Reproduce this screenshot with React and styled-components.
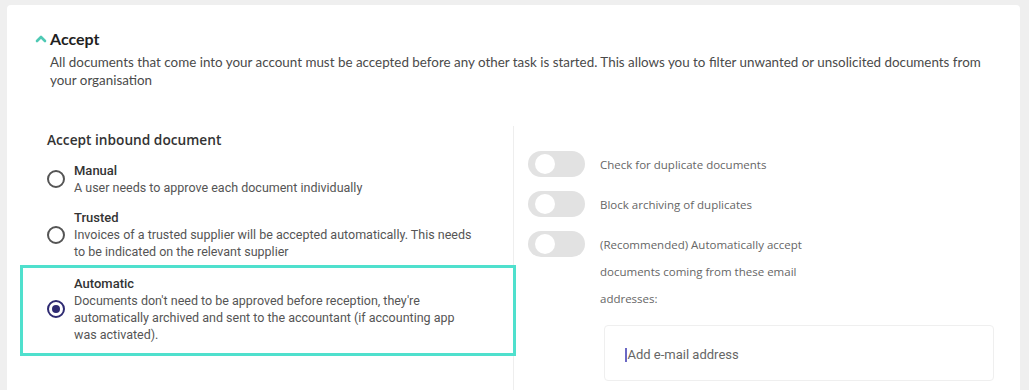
import React from "react";
import styled, { createGlobalStyle } from "styled-components";

const Global = createGlobalStyle`
  html, body { margin: 0; padding: 0; background: #efefef; }
  body { height: 390px; overflow: hidden; }
  * { box-sizing: border-box; }
`;

const Page = styled.div`
  padding: 5px 9px 0 7px;
  height: 390px;
`;

const Card = styled.section`
  background: #fff;
  border-radius: 4px 4px 0 0;
  height: 100%;
  padding: 0 13px;
  display: flex;
  flex-direction: column;
  overflow: hidden;
  font-family: Lato, "Open Sans", sans-serif;
`;

const Header = styled.header`
  padding: 24px 0 0 15px;
`;

const TitleRow = styled.div`
  display: flex;
  align-items: center;
  gap: 3px;
`;

const Title = styled.h2`
  margin: 0;
  font-family: Lato, sans-serif;
  font-weight: 700;
  font-size: 16px;
  line-height: 20px;
  color: #1f1f1f;
`;

const Description = styled.p`
  margin: 4px 0 0 15px;
  font-family: Lato, sans-serif;
  font-size: 13.4px;
  line-height: 18px;
  color: #4a4a4a;
  max-width: 940px;
`;

const Columns = styled.div`
  display: grid;
  grid-template-columns: 493px 1fr;
  margin-top: 37px;
  flex: 1;
  min-height: 0;
`;

const LeftCol = styled.div`
  padding-top: 4px;
`;

const RightCol = styled.div`
  border-left: 1px solid #eeeeee;
  padding: 25px 0 0 14px;
`;

const SectionTitle = styled.h3`
  margin: 0 0 0 27px;
  font-family: "Open Sans", sans-serif;
  font-weight: 600;
  font-size: 13.7px;
  line-height: 20px;
  color: #333;
`;

const Options = styled.div`
  display: flex;
  flex-direction: column;
  gap: 13px;
  margin-top: 12px;
`;

const Option = styled.label`
  display: flex;
  align-items: center;
  gap: 9px;
  padding: ${(p) => (p.$selected ? "7px 8px 10px 24px" : "0 8px 0 27px")};
  border: ${(p) => (p.$selected ? "3px solid #4fe0cd" : "none")};
  margin-right: ${(p) => (p.$selected ? "-3px" : "0")};
  margin-top: ${(p) => (p.$selected ? "-8px" : "0")};
  position: relative;
  cursor: pointer;
`;

const Radio = styled.span`
  flex: none;
  width: 18px;
  height: 18px;
  border-radius: 50%;
  border: 2px solid ${(p) => (p.$checked ? "#2e2a72" : "#555")};
  display: flex;
  align-items: center;
  justify-content: center;
  &::after {
    content: "";
    width: 8px;
    height: 8px;
    border-radius: 50%;
    background: ${(p) => (p.$checked ? "#2e2a72" : "transparent")};
  }
`;

const OptionText = styled.div`
  font-family: Roboto, sans-serif;
  max-width: 405px;
`;

const OptionTitle = styled.div`
  font-size: 13px;
  font-weight: 500;
  line-height: 17px;
  color: #333;
`;

const OptionDesc = styled.div`
  font-size: 12.5px;
  line-height: 17px;
  color: #555;
`;

const ToggleList = styled.div`
  display: flex;
  flex-direction: column;
  gap: 13px;
`;

const ToggleRow = styled.div`
  display: flex;
  align-items: flex-start;
  gap: 15px;
`;

const Toggle = styled.span`
  flex: none;
  width: 57px;
  height: 26px;
  border-radius: 13px;
  background: #e2e2e2;
  position: relative;
  &::after {
    content: "";
    position: absolute;
    left: 7px;
    top: 3px;
    width: 20px;
    height: 20px;
    border-radius: 50%;
    background: #fff;
  }
`;

const ToggleLabel = styled.span`
  font-family: "Open Sans", sans-serif;
  font-size: 11.5px;
  line-height: 27px;
  color: #666;
  max-width: ${(p) => (p.$narrow ? "215px" : "none")};
`;

const EmailBox = styled.div`
  margin: 13px 0 0 76px;
  width: 390px;
  height: 56px;
  border: 1px solid #efefef;
  border-radius: 4px;
  display: flex;
  align-items: center;
  padding-left: 20px;
  padding-top: 3px;
`;

const Caret = styled.span`
  width: 1.5px;
  height: 14px;
  background: #6b68c4;
  margin-right: 1px;
`;

const Placeholder = styled.span`
  font-family: Roboto, sans-serif;
  font-size: 13px;
  color: #666;
`;

const Chevron = () => (
  <svg width="12" height="10" viewBox="0 0 12 10">
    <path d="M2 7 L6 3 L10 7" fill="none" stroke="#4fc9b4" strokeWidth="2.6" strokeLinecap="round" strokeLinejoin="round" />
  </svg>
);

const options = [
  { title: "Manual", desc: "A user needs to approve each document individually" },
  { title: "Trusted", desc: "Invoices of a trusted supplier will be accepted automatically. This needs to be indicated on the relevant supplier" },
  { title: "Automatic", desc: "Documents don't need to be approved before reception, they're automatically archived and sent to the accountant (if accounting app was activated).", selected: true },
];

export default function App() {
  return (
    <>
      <Global />
      <Page>
        <Card>
          <Header>
            <TitleRow>
              <Chevron />
              <Title>Accept</Title>
            </TitleRow>
            <Description>
              All documents that come into your account must be accepted before any other task is started. This allows you to filter unwanted or unsolicited documents from your organisation
            </Description>
          </Header>
          <Columns>
            <LeftCol>
              <SectionTitle>Accept inbound document</SectionTitle>
              <Options>
                {options.map((o) => (
                  <Option key={o.title} $selected={o.selected}>
                    <Radio $checked={o.selected} />
                    <OptionText>
                      <OptionTitle>{o.title}</OptionTitle>
                      <OptionDesc>{o.desc}</OptionDesc>
                    </OptionText>
                  </Option>
                ))}
              </Options>
            </LeftCol>
            <RightCol>
              <ToggleList>
                <ToggleRow>
                  <Toggle />
                  <ToggleLabel>Check for duplicate documents</ToggleLabel>
                </ToggleRow>
                <ToggleRow>
                  <Toggle />
                  <ToggleLabel>Block archiving of duplicates</ToggleLabel>
                </ToggleRow>
                <ToggleRow>
                  <Toggle />
                  <ToggleLabel $narrow>
                    (Recommended) Automatically accept documents coming from these email addresses:
                  </ToggleLabel>
                </ToggleRow>
              </ToggleList>
              <EmailBox>
                <Caret />
                <Placeholder>Add e-mail address</Placeholder>
              </EmailBox>
            </RightCol>
          </Columns>
        </Card>
      </Page>
    </>
  );
}
